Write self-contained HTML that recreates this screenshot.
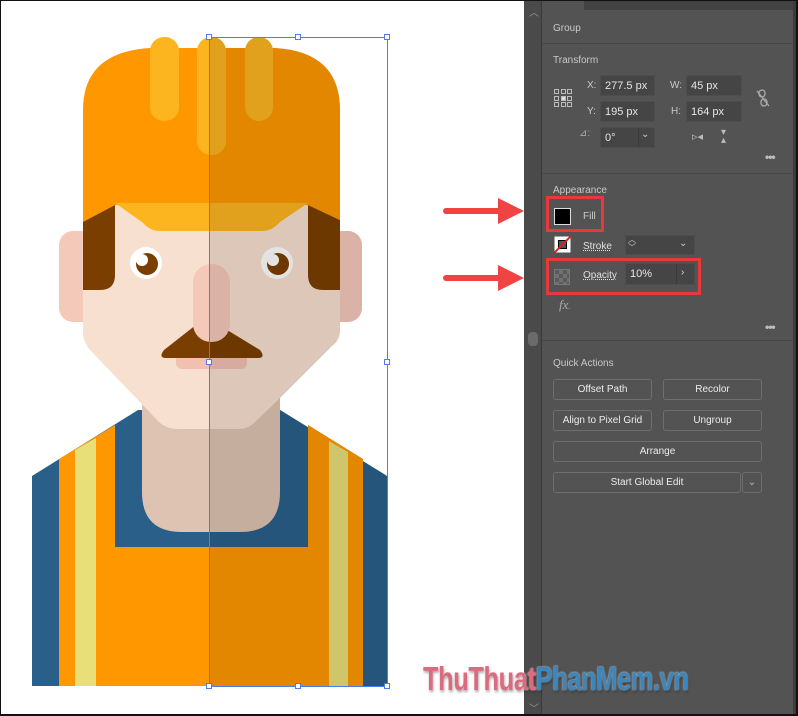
<!DOCTYPE html>
<html><head><meta charset="utf-8"><style>
*{margin:0;padding:0;box-sizing:border-box}
body{width:798px;height:716px;overflow:hidden;background:#fff;font-family:"Liberation Sans",sans-serif;position:relative}
.a{position:absolute}
.t{position:absolute;color:#c9c9c9;font-size:10px;white-space:nowrap}
.inp{position:absolute;background:#454545;border:1px solid #4d4d4d;border-radius:2px;color:#e6e6e6;font-size:11px;padding-left:4px;display:flex;align-items:center}
.btn{position:absolute;border:1px solid #6e6e6e;border-radius:3px;color:#ececec;font-size:10px;text-align:center;line-height:19px;background:#535353}
.line{position:absolute;left:542px;width:251px;height:1px;background:#474747}
.dots{position:absolute;color:#bdbdbd;font-size:12px;letter-spacing:-1px;font-weight:bold}
</style></head><body>
<svg class="a" style="left:0;top:0" width="524" height="716" viewBox="0 0 524 716">
<defs>
<symbol id="fig" viewBox="0 0 524 716" width="524" height="716">
<polygon points="32,476 138,410 280,410 387,476 387,686 32,686" fill="#2a5f8a"/>
<polygon points="59,459 115,425 115,547 308,547 308,425 363,459 363,686 59,686" fill="#ff9800"/>
<polygon points="75,450 96,438 96,686 75,686" fill="#e9df78"/>
<polygon points="329,441 348,452 348,686 329,686" fill="#e9df78"/>
<path d="M142,390 H280 V492 Q280,532 240,532 H182 Q142,532 142,492 Z" fill="#dec3b3"/>
<rect x="59" y="231" width="40" height="91" rx="14" fill="#f5c9ba"/>
<rect x="324" y="231" width="38" height="91" rx="14" fill="#f5c9ba"/>
<path d="M83,200 H340 V330 Q340,340 332,346 L280,398 L255,422 Q248,429 238,429 H178 Q166,429 158,421 L90,350 Q83,342 83,332 Z" fill="#f8e0d0"/>
<path d="M83,220 L115,205 V275 Q115,290 100,290 H83 Z" fill="#7a3e00"/>
<path d="M340,220 L308,205 V275 Q308,290 323,290 H340 Z" fill="#7a3e00"/>
<path d="M83,110 Q83,52 150,48 H275 Q340,52 340,110 V220 L308,205 H115 L83,222 Z" fill="#ff9800"/>
<path d="M115,203 H308 L280,222 Q272,231 262,231 H160 Q150,231 142,222 Z" fill="#fdb51f"/>
<rect x="150" y="37" width="29" height="84" rx="14" fill="#fdb51f"/>
<rect x="197" y="37" width="29" height="118" rx="14" fill="#fdb51f"/>
<rect x="245" y="37" width="28" height="84" rx="14" fill="#fdb51f"/>
<ellipse cx="146" cy="263" rx="16" ry="16" fill="#fff"/>
<circle cx="147" cy="264" r="11" fill="#7a3e00"/>
<circle cx="142" cy="260" r="6" fill="#fff"/>
<ellipse cx="277" cy="263" rx="16" ry="16" fill="#fff"/>
<circle cx="278" cy="264" r="11" fill="#7a3e00"/>
<circle cx="273" cy="260" r="6" fill="#fff"/>
<rect x="176" y="350" width="71" height="19" rx="6" fill="#f2c0b0"/>
<path d="M206,317 L260,350 Q266,358 258,358 H166 Q158,358 164,350 Z" fill="#7a3e00"/>
<rect x="193" y="264" width="37" height="78" rx="18" fill="#f5c9ba"/>
</symbol>
<clipPath id="rc"><rect x="209" y="0" width="200" height="716"/></clipPath>
<filter id="dk" color-interpolation-filters="sRGB" x="0" y="0" width="1" height="1"><feColorMatrix type="matrix" values="0.89 0 0 0 0 0 0.89 0 0 0 0 0 0.89 0 0 0 0 0 1 0"/></filter>
</defs>
<use href="#fig"/>
<g clip-path="url(#rc)"><use href="#fig" filter="url(#dk)"/></g>
<rect x="209.5" y="37.5" width="178" height="649" fill="none" stroke="#4e7bef" stroke-width="1"/>
<g fill="#fff" stroke="#4e7bef" stroke-width="1">
<rect x="206.5" y="34.5" width="5" height="5"/><rect x="295.5" y="34.5" width="5" height="5"/><rect x="384.5" y="34.5" width="5" height="5"/>
<rect x="206.5" y="359.5" width="5" height="5"/><rect x="384.5" y="359.5" width="5" height="5"/>
<rect x="206.5" y="683.5" width="5" height="5"/><rect x="295.5" y="683.5" width="5" height="5"/><rect x="384.5" y="683.5" width="5" height="5"/>
</g>
<g fill="#f04444" stroke="#f04444">
<line x1="446" y1="211" x2="500" y2="211" stroke-width="6" stroke-linecap="round"/>
<polygon points="498,198 524,211 498,224" stroke="none"/>
<line x1="446" y1="278" x2="500" y2="278" stroke-width="6" stroke-linecap="round"/>
<polygon points="498,265 524,278 498,291" stroke="none"/>
</g>
</svg>
<div class="a" style="left:524px;top:0;width:274px;height:716px;background:#535353"></div>
<div class="a" style="left:524px;top:0;width:18px;height:716px;background:#4a4a4a;border-right:1px solid #3a3a3a"></div>
<div class="a" style="left:528px;top:332px;width:10px;height:14px;background:#6a6a6a;border-radius:4px"></div>
<div class="t" style="left:529px;top:4px;color:#999">︿</div>
<div class="t" style="left:529px;top:700px;color:#999">﹀</div>
<div class="a" style="left:542px;top:0;width:252px;height:10px;background:#424242"></div>
<div class="a" style="left:542px;top:0;width:42px;height:10px;background:#535353"></div>
<div class="a" style="left:793px;top:0;width:5px;height:716px;background:#3c3c3c"></div>
<div class="t" style="left:553px;top:23px">Group</div>
<div class="line" style="top:43px"></div>
<div class="t" style="left:553px;top:55px">Transform</div>
<svg class="a" style="left:553px;top:88px" width="20" height="20" viewBox="0 0 20 20" fill="none" stroke="#bbb" stroke-width="1"><rect x="1.5" y="1.5" width="4" height="4"/><rect x="8.5" y="1.5" width="4" height="4"/><rect x="14.5" y="1.5" width="4" height="4"/><rect x="1.5" y="8.5" width="4" height="4"/><rect x="8.5" y="8.5" width="4" height="4" fill="#ddd"/><rect x="14.5" y="8.5" width="4" height="4"/><rect x="1.5" y="14.5" width="4" height="4"/><rect x="8.5" y="14.5" width="4" height="4"/><rect x="14.5" y="14.5" width="4" height="4"/></svg>
<div class="t" style="left:587px;top:80px">X:</div>
<div class="inp" style="left:600px;top:75px;width:55px;height:21px">277.5 px</div>
<div class="t" style="left:670px;top:80px">W:</div>
<div class="inp" style="left:686px;top:75px;width:56px;height:21px">45 px</div>
<div class="t" style="left:587px;top:106px">Y:</div>
<div class="inp" style="left:600px;top:101px;width:55px;height:21px">195 px</div>
<div class="t" style="left:671px;top:106px">H:</div>
<div class="inp" style="left:686px;top:101px;width:56px;height:21px">164 px</div>
<svg class="a" style="left:755px;top:88px" width="16" height="20" viewBox="0 0 16 20" fill="none" stroke="#aaa" stroke-width="1.3"><rect x="4" y="2" width="6" height="7" rx="3"/><rect x="6" y="11" width="6" height="7" rx="3"/><line x1="2" y1="3" x2="14" y2="18"/></svg>
<div class="t" style="left:579px;top:128px;color:#aaa">⊿:</div>
<div class="inp" style="left:600px;top:127px;width:55px;height:21px">0°</div>
<div class="a" style="left:638px;top:128px;width:1px;height:19px;background:#3a3a3a"></div>
<div class="t" style="left:641px;top:129px;color:#ccc">⌄</div>
<div class="t" style="left:692px;top:130px;color:#bbb;font-size:11px">▹◂</div>
<div class="t" style="left:721px;top:129px;color:#bbb;font-size:10px;line-height:8px">▾<br>▴</div>
<div class="dots" style="left:765px;top:150px">•••</div>
<div class="line" style="top:173px"></div>
<div class="t" style="left:553px;top:185px">Appearance</div>
<div class="a" style="left:546px;top:196px;width:58px;height:36px;border:3px solid #e8383d"></div>
<div class="a" style="left:554px;top:208px;width:17px;height:17px;background:#000;border:1px solid #ddd"></div>
<div class="t" style="left:583px;top:211px">Fill</div>
<svg class="a" style="left:554px;top:236px" width="17" height="17"><rect x="0.5" y="0.5" width="16" height="16" fill="#fff"/><rect x="4.5" y="4.5" width="8" height="8" fill="#535353" stroke="#000"/><line x1="0" y1="17" x2="17" y2="0" stroke="#e02020" stroke-width="2"/></svg>
<div class="t" style="left:583px;top:241px;color:#e0e0e0;text-decoration:underline dotted">Stroke</div>
<div class="inp" style="left:625px;top:235px;width:70px;height:20px"></div>
<div class="t" style="left:628px;top:236px;color:#ccc;font-size:8px;line-height:8px">︿<br>﹀</div>
<div class="t" style="left:679px;top:238px;color:#ccc">⌄</div>
<div class="a" style="left:546px;top:258px;width:155px;height:37px;border:3px solid #e8383d"></div>
<div class="a" style="left:554px;top:269px;width:16px;height:16px;background:repeating-conic-gradient(#707070 0 25%,#5a5a5a 0 50%) 0 0/8px 8px;border:1px solid #777"></div>
<div class="t" style="left:583px;top:270px;color:#e0e0e0;text-decoration:underline dotted">Opacity</div>
<div class="inp" style="left:625px;top:263px;width:70px;height:22px">10%</div>
<div class="a" style="left:676px;top:264px;width:1px;height:20px;background:#3a3a3a"></div>
<div class="t" style="left:681px;top:267px;color:#ddd">›</div>
<div class="t" style="left:559px;top:297px;color:#aaa;font-style:italic;font-size:13px;font-family:'Liberation Serif',serif">fx<span style="font-size:8px">.</span></div>
<div class="dots" style="left:765px;top:320px">•••</div>
<div class="line" style="top:340px"></div>
<div class="t" style="left:553px;top:358px">Quick Actions</div>
<div class="btn" style="left:553px;top:379px;width:99px;height:21px">Offset Path</div>
<div class="btn" style="left:663px;top:379px;width:99px;height:21px">Recolor</div>
<div class="btn" style="left:553px;top:410px;width:99px;height:21px">Align to Pixel Grid</div>
<div class="btn" style="left:663px;top:410px;width:99px;height:21px">Ungroup</div>
<div class="btn" style="left:553px;top:441px;width:209px;height:21px">Arrange</div>
<div class="btn" style="left:553px;top:472px;width:188px;height:21px">Start Global Edit</div>
<div class="btn" style="left:742px;top:472px;width:20px;height:21px;color:#bbb">⌄</div>
<div class="a" style="left:423px;top:660px;font-weight:bold;font-size:33px;letter-spacing:-0.5px;text-shadow:1px 2px 3px rgba(0,0,0,.35),0 0 2px #fff;white-space:nowrap;transform:scaleX(0.77);transform-origin:0 0"><span style="color:#dc6b80">ThuThuat</span><span style="color:#3a86bd">PhanMem.vn</span></div>
<div class="a" style="left:0;top:0;width:798px;height:716px;border:1px solid #111;border-right:2px solid #111;border-bottom:2px solid #111"></div>
</body></html>
